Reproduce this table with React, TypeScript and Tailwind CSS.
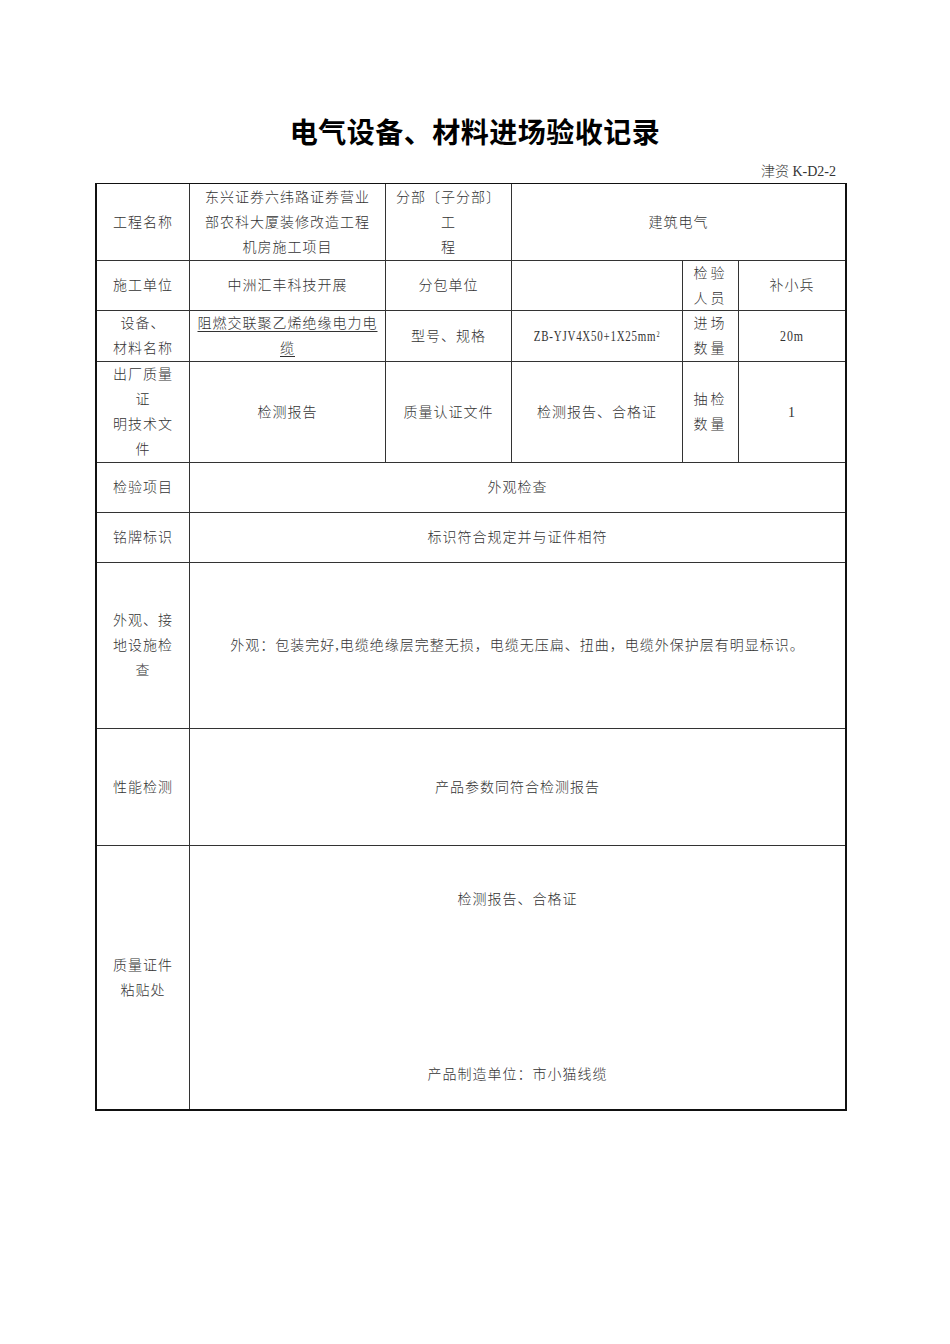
import React from "react"

const cjk = "font-['Liberation_Serif','Noto_Sans_CJK_SC',serif]"

function Cell({ children, className = "" }: { children?: React.ReactNode; className?: string }) {
  return (
    <div className={`bg-white flex flex-col items-center justify-center text-center text-[14px] leading-[25px] tracking-[1px] text-[#333] font-light ${className}`}>
      {children}
    </div>
  )
}

export default function App() {
  return (
    <div className={`w-[950px] h-[1344px] bg-white ${cjk}`}>
      <div className="pt-[116px] text-center text-[28px] leading-[36px] font-bold text-black tracking-[0.5px]">
        电气设备、材料进场验收记录
      </div>
      <div className="mt-[10px] pr-[114px] text-right text-[14px] leading-[20px] text-[#333] font-light">
        津资 K-D2-2
      </div>

      <div className="mt-[1px] ml-[95px] w-[752px] border-l-2 border-r-2 border-t border-b-2 border-[#111] bg-[#333] grid grid-cols-[92px_195px_125px_170px_55px_106px] grid-rows-[76px_49px_50px_100px_49px_49px_165px_116px_263px] gap-px">
        {/* row 1 */}
        <Cell>工程名称</Cell>
        <Cell>
          <span>东兴证券六纬路证券营业</span>
          <span>部农科大厦装修改造工程</span>
          <span>机房施工项目</span>
        </Cell>
        <Cell>
          <span>分部〔子分部〕</span>
          <span>工</span>
          <span>程</span>
        </Cell>
        <Cell className="col-span-3">建筑电气</Cell>

        {/* row 2 */}
        <Cell>施工单位</Cell>
        <Cell>中洲汇丰科技开展</Cell>
        <Cell>分包单位</Cell>
        <Cell></Cell>
        <Cell className="tracking-[3px]">
          <span>检验</span>
          <span>人员</span>
        </Cell>
        <Cell>补小兵</Cell>

        {/* row 3 */}
        <Cell>
          <span>设备、</span>
          <span>材料名称</span>
        </Cell>
        <Cell className="text-[13px] tracking-[0.7px]">
          <span className="underline underline-offset-[3px]">阻燃交联聚乙烯绝缘电力电</span>
          <span className="underline underline-offset-[3px]">缆</span>
        </Cell>
        <Cell>型号、规格</Cell>
        <Cell className="text-[13px] tracking-[-0.4px] font-['Liberation_Serif',serif] font-normal">
          <span className="inline-block scale-x-[0.78] whitespace-nowrap">
            ZB-YJV4X50+1X25mm<sup className="text-[8px]">2</sup>
          </span>
        </Cell>
        <Cell className="tracking-[3px]">
          <span>进场</span>
          <span>数量</span>
        </Cell>
        <Cell className="font-['Liberation_Serif',serif] font-normal">
          <span className="inline-block scale-x-[0.85]">20m</span>
        </Cell>

        {/* row 4 */}
        <Cell>
          <span>出厂质量</span>
          <span>证</span>
          <span>明技术文</span>
          <span>件</span>
        </Cell>
        <Cell>检测报告</Cell>
        <Cell>质量认证文件</Cell>
        <Cell>检测报告、合格证</Cell>
        <Cell className="tracking-[3px]">
          <span>抽检</span>
          <span>数量</span>
        </Cell>
        <Cell className="font-['Liberation_Serif',serif] font-normal">1</Cell>

        {/* row 5 */}
        <Cell>检验项目</Cell>
        <Cell className="col-span-5">外观检查</Cell>

        {/* row 6 */}
        <Cell>铭牌标识</Cell>
        <Cell className="col-span-5">标识符合规定并与证件相符</Cell>

        {/* row 7 */}
        <Cell>
          <span>外观、接</span>
          <span>地设施检</span>
          <span>查</span>
        </Cell>
        <Cell className="col-span-5 tracking-[0.8px]">
          外观：包装完好,电缆绝缘层完整无损，电缆无压扁、扭曲，电缆外保护层有明显标识。
        </Cell>

        {/* row 8 */}
        <Cell>性能检测</Cell>
        <Cell className="col-span-5">产品参数同符合检测报告</Cell>

        {/* row 9 */}
        <Cell>
          <span>质量证件</span>
          <span>粘贴处</span>
        </Cell>
        <Cell className="col-span-5 justify-start pt-[41px]">
          <span>检测报告、合格证</span>
          <span className="mt-[150px]">产品制造单位：市小猫线缆</span>
        </Cell>
      </div>
    </div>
  )
}
